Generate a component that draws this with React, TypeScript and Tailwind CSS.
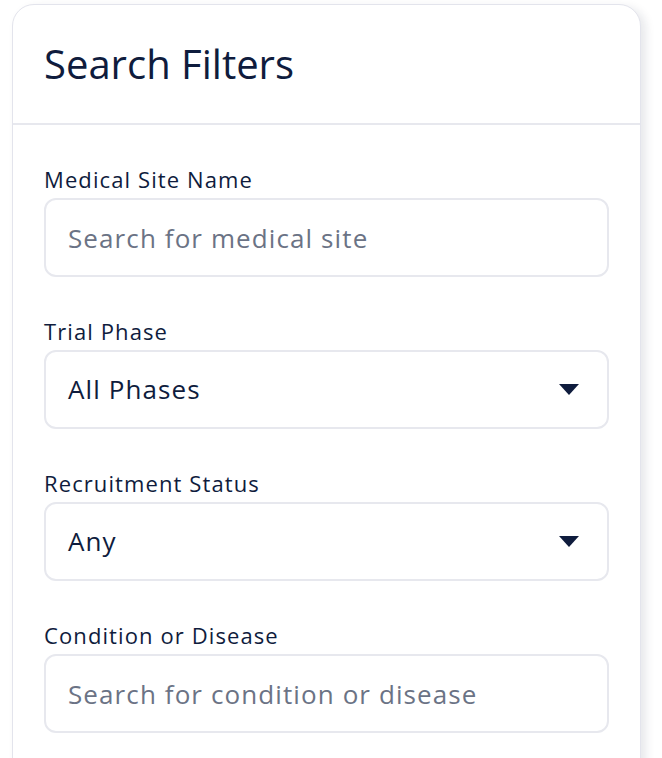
const font = { fontFamily: '"Open Sans", "Noto Sans", sans-serif' };

function Chevron() {
  return (
    <svg width="20" height="11" viewBox="0 0 20 11" className="shrink-0">
      <path d="M0 0 L20 0 L10 11 Z" fill="#0f1c3d" />
    </svg>
  );
}

function TextField({ label, placeholder }: { label: string; placeholder: string }) {
  return (
    <div className="flex flex-col gap-1">
      <label className="text-[22px] leading-[30px] tracking-[1.1px] text-[#0f1c3d]">{label}</label>
      <input
        placeholder={placeholder}
        className="h-[79px] w-full rounded-[12px] border-2 border-[#e7e8ee] bg-white px-[22px] text-[26px] tracking-[1.1px] text-[#0f1c3d] outline-none placeholder:text-[#6b7385]"
      />
    </div>
  );
}

function SelectField({ label, value }: { label: string; value: string }) {
  return (
    <div className="flex flex-col gap-1">
      <span className="text-[22px] leading-[30px] tracking-[1.1px] text-[#0f1c3d]">{label}</span>
      <div className="flex h-[79px] w-full items-center justify-between rounded-[12px] border-2 border-[#e7e8ee] bg-white pl-[22px] pr-[28px]">
        <span className="text-[26px] tracking-[1.1px] text-[#0f1c3d]">{value}</span>
        <Chevron />
      </div>
    </div>
  );
}

export default function App() {
  return (
    <div className="min-h-screen bg-white pt-1" style={font}>
      <div className="ml-3 w-[629px] rounded-t-[22px] border border-[#e3e4ec] bg-white shadow-[5px_3px_10px_rgba(20,30,60,0.10)]">
        <div className="flex h-[120px] items-center border-b-2 border-[#e7e8ee] px-[31px]">
          <h1 className="text-[40px] leading-none text-[#0f1c3d]">Search Filters</h1>
        </div>
        <div className="flex flex-col gap-[39px] px-[31px] pt-[39px] pb-10">
          <TextField label="Medical Site Name" placeholder="Search for medical site" />
          <SelectField label="Trial Phase" value="All Phases" />
          <SelectField label="Recruitment Status" value="Any" />
          <TextField label="Condition or Disease" placeholder="Search for condition or disease" />
        </div>
      </div>
    </div>
  );
}
